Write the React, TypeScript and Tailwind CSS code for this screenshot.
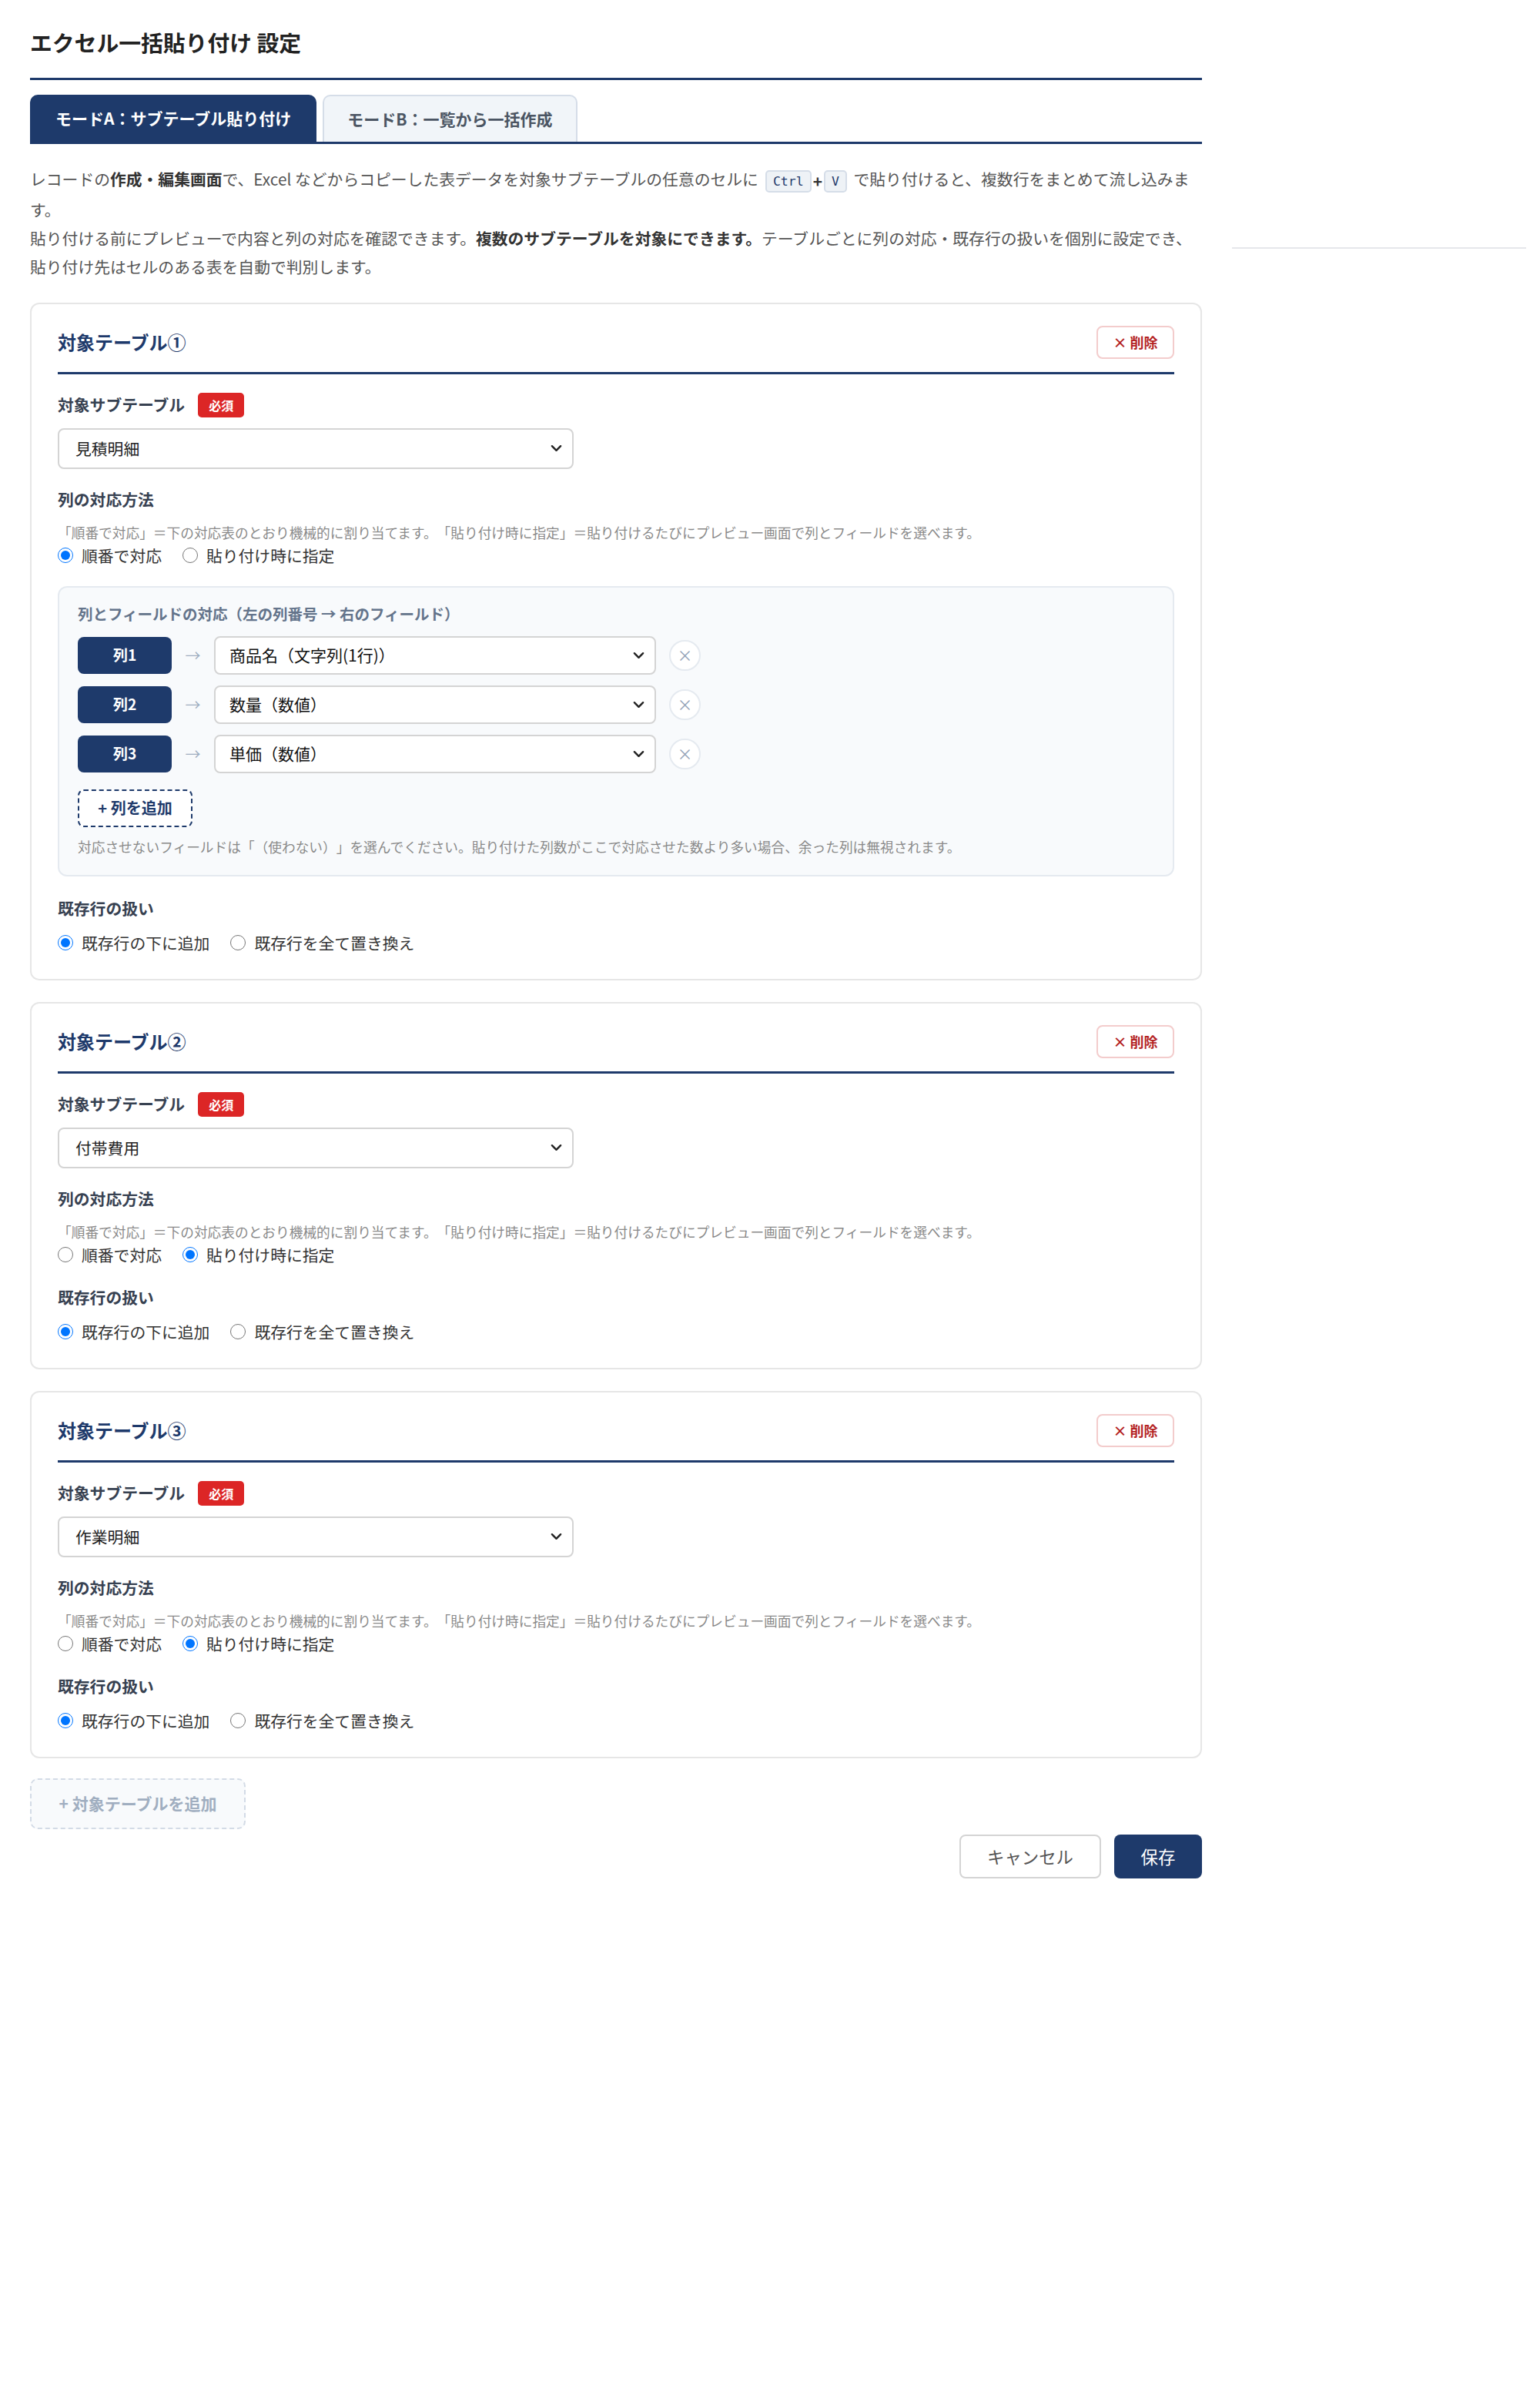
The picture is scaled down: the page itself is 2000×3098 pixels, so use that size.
import { useState } from "react"

type TableConf = {
  label: string
  subtable: string
  mapMode: "order" | "paste"
  rowMode: "append" | "replace"
  columns?: string[]
}

const SUBTABLES = ["見積明細", "付帯費用", "作業明細"]
const FIELDS = ["商品名（文字列(1行)）", "数量（数値）", "単価（数値）", "（使わない）"]

const initialTables: TableConf[] = [
  {
    label: "対象テーブル①",
    subtable: "見積明細",
    mapMode: "order",
    rowMode: "append",
    columns: ["商品名（文字列(1行)）", "数量（数値）", "単価（数値）"],
  },
  { label: "対象テーブル②", subtable: "付帯費用", mapMode: "paste", rowMode: "append" },
  { label: "対象テーブル③", subtable: "作業明細", mapMode: "paste", rowMode: "append" },
]

function Chevron() {
  return (
    <svg
      viewBox="0 0 16 10"
      className="pointer-events-none absolute right-[15px] top-1/2 h-[10px] w-[15px] -translate-y-1/2"
      fill="none"
      stroke="#222"
      strokeWidth="2.6"
      strokeLinecap="round"
      strokeLinejoin="round"
    >
      <path d="M2 2l6 6 6-6" />
    </svg>
  )
}

function Select({
  value,
  options,
  className,
  textClass,
}: {
  value: string
  options: string[]
  className: string
  textClass: string
}) {
  return (
    <div className={"relative " + className}>
      <select
        defaultValue={value}
        className={
          "h-full w-full appearance-none rounded-[8px] border-2 border-[#d4d4d4] bg-white pr-[40px] outline-none " +
          textClass
        }
      >
        {options.map((o) => (
          <option key={o}>{o}</option>
        ))}
      </select>
      <Chevron />
    </div>
  )
}

function Radio({ name, checked, label }: { name: string; checked: boolean; label: string }) {
  return (
    <label className="flex items-center gap-[11px]">
      <input type="radio" name={name} defaultChecked={checked} className="m-0 h-[20px] w-[20px]" />
      <span className="text-[20.8px] leading-[24px] text-[#333]">{label}</span>
    </label>
  )
}

function MappingBox({ columns }: { columns: string[] }) {
  return (
    <div className="mt-[28px] rounded-[12px] border-2 border-[#e5eaf0] bg-[#f8fafc] px-[24px] pb-[24px] pt-[21px]">
      <p className="text-[19.5px] font-bold leading-[26px] text-[#64748b]">
        列とフィールドの対応（左の列番号 → 右のフィールド）
      </p>
      <div className="mt-[16px] flex flex-col gap-[14px]">
        {columns.map((c, i) => (
          <div key={i} className="flex h-[50px] items-center gap-[17px]">
            <span className="flex h-[48px] w-[122px] items-center justify-center rounded-[8px] bg-[#1e3a6b] text-[19.2px] font-bold text-white">
              列{i + 1}
            </span>
            <span className="w-[21px] text-center text-[20px] text-[#a0aec0]">→</span>
            <Select
              value={c}
              options={FIELDS}
              className="h-[50px] w-[574px]"
              textClass="pl-[18px] text-[21px] text-[#111]"
            />
            <button className="flex h-[40px] w-[41px] items-center justify-center rounded-full border-2 border-[#e5eaf0] bg-white text-[20px] text-[#94a3b8]">
              ×
            </button>
          </div>
        ))}
      </div>
      <button className="mt-[21px] h-[49px] w-[149px] rounded-[8px] border-2 border-dashed border-[#1e3a6b] bg-white text-[20px] font-bold text-[#1e3a6b]">
        + 列を追加
      </button>
      <p className="mt-[12px] text-[17.7px] leading-[26px] text-[#8a8a8a]">
        対応させないフィールドは「（使わない）」を選んでください。貼り付けた列数がここで対応させた数より多い場合、余った列は無視されます。
      </p>
    </div>
  )
}

function TableCard({ t, idx }: { t: TableConf; idx: number }) {
  return (
    <section className="rounded-[12px] border-2 border-[#e6e6e6] bg-white px-[34px] pb-[35px] pt-[28px]">
      <div className="border-b-[3px] border-[#1e3a6b] pb-[17px]">
        <div className="flex h-[43px] items-center justify-between">
          <h2 className="text-[24px] font-bold leading-none text-[#1e3a6b]">{t.label}</h2>
          <button className="h-[43px] w-[101px] rounded-[8px] border-2 border-[#f3cccc] bg-white text-[18px] font-bold text-[#b42323]">
            × 削除
          </button>
        </div>
      </div>

      <div className="mt-[24px] flex h-[32px] items-center gap-[17px]">
        <span className="text-[20.8px] font-bold text-[#374151]">対象サブテーブル</span>
        <span className="flex h-[32px] items-center rounded-[5px] bg-[#dc2626] px-[14px] text-[16px] font-bold text-white">
          必須
        </span>
      </div>
      <Select
        value={t.subtable}
        options={SUBTABLES}
        className="mt-[14px] h-[53px] w-[670px]"
        textClass="pl-[21px] text-[20.8px] text-[#222]"
      />

      <p className="mt-[24px] text-[20.8px] font-bold leading-[30px] text-[#374151]">列の対応方法</p>
      <p className="mt-[15px] text-[17.7px] leading-[26px] text-[#8a8a8a]">
        「順番で対応」＝下の対応表のとおり機械的に割り当てます。「貼り付け時に指定」＝貼り付けるたびにプレビュー画面で列とフィールドを選べます。
      </p>
      <div className="mt-[5px] flex h-[24px] items-center gap-[27px]">
        <Radio name={`map-${idx}`} checked={t.mapMode === "order"} label="順番で対応" />
        <Radio name={`map-${idx}`} checked={t.mapMode === "paste"} label="貼り付け時に指定" />
      </div>

      {t.columns ? <MappingBox columns={t.columns} /> : null}

      <p
        className={
          (t.columns ? "mt-[26px]" : "mt-[28px]") +
          " text-[20.8px] font-bold leading-[30px] text-[#374151]"
        }
      >
        既存行の扱い
      </p>
      <div className="mt-[18px] flex h-[24px] items-center gap-[27px]">
        <Radio name={`row-${idx}`} checked={t.rowMode === "append"} label="既存行の下に追加" />
        <Radio name={`row-${idx}`} checked={t.rowMode === "replace"} label="既存行を全て置き換え" />
      </div>
    </section>
  )
}

function Kbd({ children }: { children: string }) {
  return (
    <kbd className="inline-block h-[29px] rounded-[5px] border-2 border-[#d5dde8] bg-[#eef2f6] px-[8px] align-middle font-['DejaVu_Sans_Mono',monospace] text-[16.5px] leading-[25px] text-[#1e3a6b]">
      {children}
    </kbd>
  )
}

export default function App() {
  const [tables] = useState(initialTables)

  return (
    <div className="flex min-h-screen bg-white font-['Noto_Sans_CJK_JP','Noto_Sans',sans-serif] [text-spacing-trim:space-all]">
      <main className="ml-[39px] w-[1522px] shrink-0">
        <h1 className="border-b-[3px] border-[#1e3a6b] pb-[26px] pt-[35px] text-[28.8px] font-bold leading-[40px] text-[#222]">
          エクセル一括貼り付け 設定
        </h1>

        <div className="mt-[19px] flex gap-[8px] border-b-[3px] border-[#1e3a6b]">
          <button className="h-[61px] rounded-t-[10px] bg-[#1e3a6b] px-[33px] text-[21px] font-bold text-white">
            モードA：サブテーブル貼り付け
          </button>
          <button className="h-[61px] rounded-t-[10px] border-2 border-b-0 border-[#d5dde8] bg-[#f1f5f9] px-[30px] text-[21px] font-bold text-[#4b5563]">
            モードB：一覧から一括作成
          </button>
        </div>

        <div className="mt-[27px] text-[20.8px] leading-[37px] text-[#555]">
          <p>
            レコードの<b className="text-[#333]">作成・編集画面</b>で、Excel
            などからコピーした表データを対象サブテーブルの任意のセルに
            <span className="ml-[9px] mr-[4px] inline-flex items-center gap-[2px] align-middle">
              <Kbd>Ctrl</Kbd>
              <span className="font-bold text-[#333]">+</span>
              <Kbd>V</Kbd>
            </span>{" "}
            で貼り付けると、複数行をまとめて流し込みます。
          </p>
          <p>
            貼り付ける前にプレビューで内容と列の対応を確認できます。
            <b className="text-[#333]">複数のサブテーブルを対象にできます。</b>
            テーブルごとに列の対応・既存行の扱いを個別に設定でき、貼り付け先はセルのある表を自動で判別します。
          </p>
        </div>

        <div className="mt-[28px] flex flex-col gap-[28px]">
          {tables.map((t, i) => (
            <TableCard key={i} t={t} idx={i} />
          ))}
        </div>

        <button className="mt-[26px] h-[66px] w-[280px] rounded-[10px] border-2 border-dashed border-[#d3dbe6] bg-[#f8fafc] text-[21px] font-bold text-[#a0aec0]">
          + 対象テーブルを追加
        </button>

        <div className="mt-[7px] flex justify-end gap-[17px]">
          <button className="h-[57px] w-[184px] rounded-[8px] border-2 border-[#d4d4d4] bg-white text-[22.4px] text-[#555]">
            キャンセル
          </button>
          <button className="h-[57px] w-[114px] rounded-[8px] bg-[#1e3a6b] text-[22.4px] text-white">
            保存
          </button>
        </div>
      </main>

      <aside className="ml-[39px] w-[382px] shrink-0 pt-[321px]">
        <div className="h-[2px] bg-[#e5e7eb]" />
      </aside>
    </div>
  )
}
